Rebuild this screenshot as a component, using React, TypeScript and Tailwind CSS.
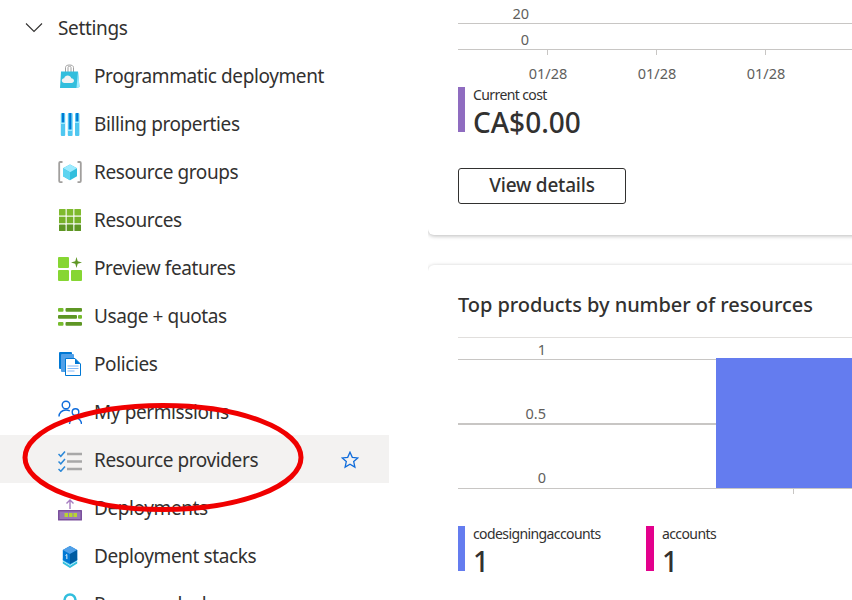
import React from "react";

const Bag = () => (
  <svg width="24" height="24" viewBox="0 0 24 24">
    <path d="M7.500 8V3.500C7.500 2 9 1 11.500 1s4 1 4 2.500V8" fill="none" stroke="#a0a0a0" strokeWidth="1" />
    <path d="M10 8V3.500c0-.8.600-1.200 1.500-1.200s1.500.4 1.500 1.200V8" fill="none" stroke="#a0a0a0" strokeWidth="1" />
    <path d="M3 7.500h17l1.500 15.500-3 1H2z" fill="#32bedd" />
    <path d="M20 7.500l1.500 15.500-3 1z" fill="#9cebff" />
    <path d="M6.500 19c-1.700 0-2.700-1.100-2.700-2.500s1-2.400 2.400-2.300c.4-1.600 1.800-2.700 3.500-2.700s3.100 1.100 3.500 2.700c1.500 0 2.800.9 2.800 2.400S15 19 13.500 19z" fill="#f2f2f2" />
  </svg>
);
const Billing = () => (
  <svg width="24" height="24" viewBox="0 0 24 24">
    <rect x="2.800" y="1" width="4.400" height="23" rx="1" fill="#50c7f0" />
    <rect x="9.800" y="1" width="4.800" height="23" rx="1" fill="#50c7f0" />
    <rect x="17" y="1" width="4.400" height="23" rx="1" fill="#50c7f0" />
    <rect x="4" y="1" width="2" height="10" fill="#0078d4" />
    <rect x="11.200" y="1" width="2" height="17" fill="#0078d4" />
    <rect x="18.200" y="1" width="2" height="9" fill="#0078d4" />
    <rect x="2.800" y="10.500" width="4.400" height="1.500" fill="#9cebff" />
    <rect x="9.800" y="17.500" width="4.800" height="1.500" fill="#9cebff" />
    <rect x="17" y="9.500" width="4.400" height="1.500" fill="#9cebff" />
  </svg>
);
const Group = () => (
  <svg width="24" height="24" viewBox="0 0 24 24">
    <path d="M4.500 2H2.300c-.7 0-1.100.4-1.100 1.100v18c0 .7.400 1.100 1.100 1.100h2.200M19.500 2h2.200c.7 0 1.100.4 1.100 1.100v18c0 .7-.4 1.100-1.100 1.100h-2.200" fill="none" stroke="#a19f9d" strokeWidth="1.800" />
    <path d="M12 4.500l7 3.800v8l-7 4-7-4v-8z" fill="#32bedd" />
    <path d="M12 4.500l7 3.800-7 4-7-4z" fill="#9cebff" />
    <path d="M5 8.300l7 4v8l-7-4z" fill="#5ed4f0" />
  </svg>
);
const Grid = () => (
  <svg width="24" height="24" viewBox="0 0 24 24">
    <g fill="#7fba2e">
      <rect x="1" y="1" width="6.600" height="6.600" rx=".6" />
      <rect x="8.700" y="1" width="6.600" height="6.600" />
      <rect x="16.400" y="1" width="6.600" height="6.600" rx=".6" />
    </g>
    <g fill="#76b02a">
      <rect x="1" y="8.700" width="6.600" height="6.600" />
      <rect x="8.700" y="8.700" width="6.600" height="6.600" />
      <rect x="16.400" y="8.700" width="6.600" height="6.600" />
    </g>
    <g fill="#5e9624">
      <rect x="1" y="16.400" width="6.600" height="6.600" rx=".6" />
      <rect x="8.700" y="16.400" width="6.600" height="6.600" />
      <rect x="16.400" y="16.400" width="6.600" height="6.600" rx=".6" />
    </g>
  </svg>
);
const Preview = () => (
  <svg width="24" height="24" viewBox="0 0 24 24" className="overflow-visible">
    <rect x="0" y="1" width="11" height="11" rx="1" fill="#86d633" />
    <rect x="0" y="14" width="11" height="11" rx="1" fill="#86d633" />
    <rect x="13" y="14" width="11" height="11" rx="1" fill="#86d633" />
    <path d="M18.500 1l1.200 4.300 4.300 1.200-4.300 1.200-1.200 4.300-1.200-4.300L13 6.500l4.300-1.200z" fill="#5e9624" />
  </svg>
);
const Usage = () => (
  <svg width="24" height="24" viewBox="0 0 24 24">
    <rect x="0" y="4" width="5.500" height="3.800" rx="1" fill="#76bc2d" />
    <rect x="7.500" y="4" width="16.500" height="3.800" rx="1" fill="#5e9624" />
    <rect x="0" y="11" width="19" height="3.800" rx="1" fill="#5e9624" />
    <rect x="20" y="11" width="4" height="3.800" rx="1" fill="#76bc2d" />
    <rect x="0" y="18" width="5.500" height="3.800" rx="1" fill="#76bc2d" />
    <rect x="7.500" y="18" width="16.500" height="3.800" rx="1" fill="#5e9624" />
  </svg>
);
const Policies = () => (
  <svg width="24" height="24" viewBox="0 0 24 24">
    <rect x="1" y="0" width="13" height="17" rx="1" fill="#0078d4" />
    <rect x="3" y="2" width="13" height="18" rx="1" fill="#50a0e8" />
    <path d="M7.500 6.500h9.500l5.500 5.500v11.500H7.500z" fill="#fff" stroke="#0078d4" strokeWidth="1" />
    <path d="M17 6.500V12h5.500z" fill="#0078d4" />
    <path d="M9.500 14h11M9.500 16.500h11M9.500 19h7" stroke="#83b9f9" strokeWidth="1.200" />
  </svg>
);
const People = () => (
  <svg width="24" height="24" viewBox="0 0 24 24" fill="none" stroke="#0f6cdb" strokeWidth="1.400">
    <circle cx="8" cy="5" r="3.800" />
    <path d="M1 16.500c0-3.700 3-6.500 7-6.500 1.500 0 2.800.4 3.900 1" />
    <circle cx="17.500" cy="12" r="3.300" />
    <path d="M11.500 24c0-3.500 2.600-6 6-6s6 2.500 6 6" />
  </svg>
);
const Checks = () => (
  <svg width="24" height="24" viewBox="0 0 24 24" fill="none">
    <path d="M.5 6l2.300 2.300L7 3.500M.5 13.500l2.300 2.300 4.200-4.800M.5 21l2.300 2.300L7 18.500" stroke="#2b88d8" strokeWidth="1.500" />
    <path d="M9 6h15M9 13.500h15M9 21h15" stroke="#a8a8a8" strokeWidth="2.300" />
  </svg>
);
const Deploy = () => (
  <svg width="24" height="24" viewBox="0 0 24 24" className="overflow-visible">
    <path d="M12 4v9M8.500 7.500L12 4l3.500 3.500" fill="none" stroke="#a67cc0" strokeWidth="1.400" />
    <rect x="0" y="14" width="24" height="10.500" rx=".5" fill="#7a4f9c" />
    <rect x="1.500" y="15.500" width="21" height="7.500" fill="#9a78b8" />
    <rect x="6.500" y="17" width="3.500" height="4" fill="#b8d432" />
    <rect x="11" y="17" width="3.500" height="4" fill="#b8d432" />
    <rect x="15.500" y="17" width="3.500" height="4" fill="#b8d432" />
  </svg>
);
const Stack = () => (
  <svg width="24" height="24" viewBox="0 0 24 24">
    <g transform="translate(1.200 2) scale(.9)">
      <path d="M4 17l8 5 8-5v2.500l-8 5-8-5z" fill="#32bedd" />
      <path d="M4 14l8 5 8-5v2.500l-8 5-8-5z" fill="#50c7f0" />
      <path d="M12 0l8 4.500v11L12 20l-8-4.500v-11z" fill="#0078d4" />
      <path d="M12 0l8 4.500L12 9 4 4.500z" fill="#50a0e8" />
      <path d="M12 9l8-4.500v11L12 20z" fill="#005ba1" />
      <path d="M7 10.500l1.500-1v5" fill="none" stroke="#fff" strokeWidth="1" />
    </g>
  </svg>
);
const Lock = () => (
  <svg width="24" height="24" viewBox="0 0 24 24">
    <path d="M6.500 11V8a5.500 5.500 0 0 1 11 0v3" fill="none" stroke="#32bedd" strokeWidth="2.500" />
    <rect x="4" y="11" width="16" height="12" rx="1" fill="#0078d4" />
  </svg>
);

const items: { label: string; icon: React.ReactNode; active?: boolean }[] = [
  { label: "Programmatic deployment", icon: <Bag /> },
  { label: "Billing properties", icon: <Billing /> },
  { label: "Resource groups", icon: <Group /> },
  { label: "Resources", icon: <Grid /> },
  { label: "Preview features", icon: <Preview /> },
  { label: "Usage + quotas", icon: <Usage /> },
  { label: "Policies", icon: <Policies /> },
  { label: "My permissions", icon: <People /> },
  { label: "Resource providers", icon: <Checks />, active: true },
  { label: "Deployments", icon: <Deploy /> },
  { label: "Deployment stacks", icon: <Stack /> },
  { label: "Resource locks", icon: <Lock /> },
];

const axisText = { fontSize: 14.500, fill: "#605e5c" };

const CostChart = () => (
  <svg width="394" height="84" className="block">
    <line x1="0" x2="394" y1="23.500" y2="23.500" stroke="#c8c6c4" />
    <line x1="0" x2="394" y1="49.500" y2="49.500" stroke="#c8c6c4" />
    <text x="71" y="19" textAnchor="end" style={axisText}>20</text>
    <text x="71" y="45" textAnchor="end" style={axisText}>0</text>
    {[90, 199, 308].map((x) => (
      <g key={x}>
        <line x1={x - 0.500} x2={x - 0.500} y1="50" y2="55" stroke="#c8c6c4" />
        <text x={x} y="79" textAnchor="middle" style={axisText}>01/28</text>
      </g>
    ))}
  </svg>
);

const ProductsChart = () => (
  <svg width="394" height="157" className="block">
    <line x1="0" x2="394" y1="0.500" y2="0.500" stroke="#e1dfdd" />
    <line x1="0" x2="394" y1="22.500" y2="22.500" stroke="#c8c6c4" />
    <line x1="0" x2="394" y1="87" y2="87" stroke="#c8c6c4" strokeWidth="2" />
    <line x1="0" x2="394" y1="151.500" y2="151.500" stroke="#c8c6c4" />
    <rect x="258" y="21" width="136" height="130" fill="#647cef" />
    <line x1="335.500" x2="335.500" y1="152" y2="157" stroke="#c8c6c4" />
    <text x="88" y="18" textAnchor="end" style={axisText}>1</text>
    <text x="88" y="82" textAnchor="end" style={axisText}>0.5</text>
    <text x="88" y="146" textAnchor="end" style={axisText}>0</text>
  </svg>
);

const Metric = ({ color, label, value, barWidth }: { color: string; label: string; value: string; barWidth: string }) => (
  <div className="flex h-[45px] items-stretch">
    <div className={barWidth} style={{ backgroundColor: color }} />
    <div className="ml-2 flex flex-col">
      <span className="text-[14px] leading-[15px] text-[#323130] tracking-[-0.6px]">{label}</span>
      <span className="mt-[2px] text-[28px] leading-[36px] font-medium text-[#323130]">{value}</span>
    </div>
  </div>
);

export default function App() {
  return (
    <div className="relative flex h-[600px] w-[852px] overflow-hidden bg-white text-[#323130] [font-family:'Noto_Sans',sans-serif]">
      <aside className="flex w-[389px] shrink-0 flex-col pt-[3px]">
        <div className="flex h-12 shrink-0 items-center pl-[25px] pt-[2px] text-[19px] tracking-[-0.35px]">
          <svg width="18" height="18" viewBox="0 0 18 18" fill="none" stroke="#323130" strokeWidth="1.100" className="mr-[15px]">
            <path d="M1 4.500l8 8 8-8" />
          </svg>
          Settings
        </div>
        {items.map((it) => (
          <div key={it.label} className={`flex h-12 shrink-0 items-center pl-[58px] pr-[30px] pt-[2px] text-[19px] tracking-[-0.4px] ${it.active ? "bg-[#f3f2f1]" : ""}`}>
            <span className="mr-3 flex h-6 w-6 shrink-0 items-center justify-center">{it.icon}</span>
            <span className="flex-1">{it.label}</span>
            {it.active && (
              <svg width="18" height="18" viewBox="0 0 18 18" fill="none" stroke="#0f6cdb" strokeWidth="1.300">
                <path d="M9 1.200l2.300 5.100 5.500.6-4.100 3.700 1.200 5.500L9 13.300l-4.900 2.800 1.200-5.500L1.200 6.900l5.500-.6z" />
              </svg>
            )}
          </div>
        ))}
      </aside>
      <main className="ml-[39px] flex flex-1 flex-col gap-[30px] overflow-hidden pl-[4px]">
        <section className="-ml-[4px] h-[235px] w-[444px] shrink-0 rounded-bl-[6px] bg-white pl-[30px] shadow-[0_1px_4px_rgba(0,0,0,0.28)]">
          <CostChart />
          <div className="mt-[3px]">
            <Metric color="#8f6cc0" label="Current cost" value="CA$0.00" barWidth="w-[7px]" />
          </div>
          <button className="mt-9 flex h-9 w-[168px] items-center justify-center rounded-[3px] border border-[#323130] pb-[2px] text-[19px] font-medium tracking-[-0.2px]">
            View details
          </button>
        </section>
        <section className="-ml-[4px] h-[400px] w-[444px] shrink-0 rounded-tl-[6px] bg-white pl-[30px] pt-[25px] shadow-[0_1px_4px_rgba(0,0,0,0.28)]">
          <h2 className="text-[20px] font-medium leading-[30px] tracking-[-0.05px] text-[#323130]">Top products by number of resources</h2>
          <div className="mt-[17px]">
            <ProductsChart />
          </div>
          <div className="mt-[32px] flex">
            <div className="w-[188px]">
              <Metric color="#647cef" label="codesigningaccounts" value="1" barWidth="w-[7px]" />
            </div>
            <Metric color="#e3008c" label="accounts" value="1" barWidth="w-[8px]" />
          </div>
        </section>
      </main>
      <svg width="852" height="600" className="pointer-events-none absolute left-0 top-0">
        <ellipse cx="163" cy="457.500" rx="138" ry="52" fill="none" stroke="#f00000" strokeWidth="5" />
      </svg>
    </div>
  );
}
